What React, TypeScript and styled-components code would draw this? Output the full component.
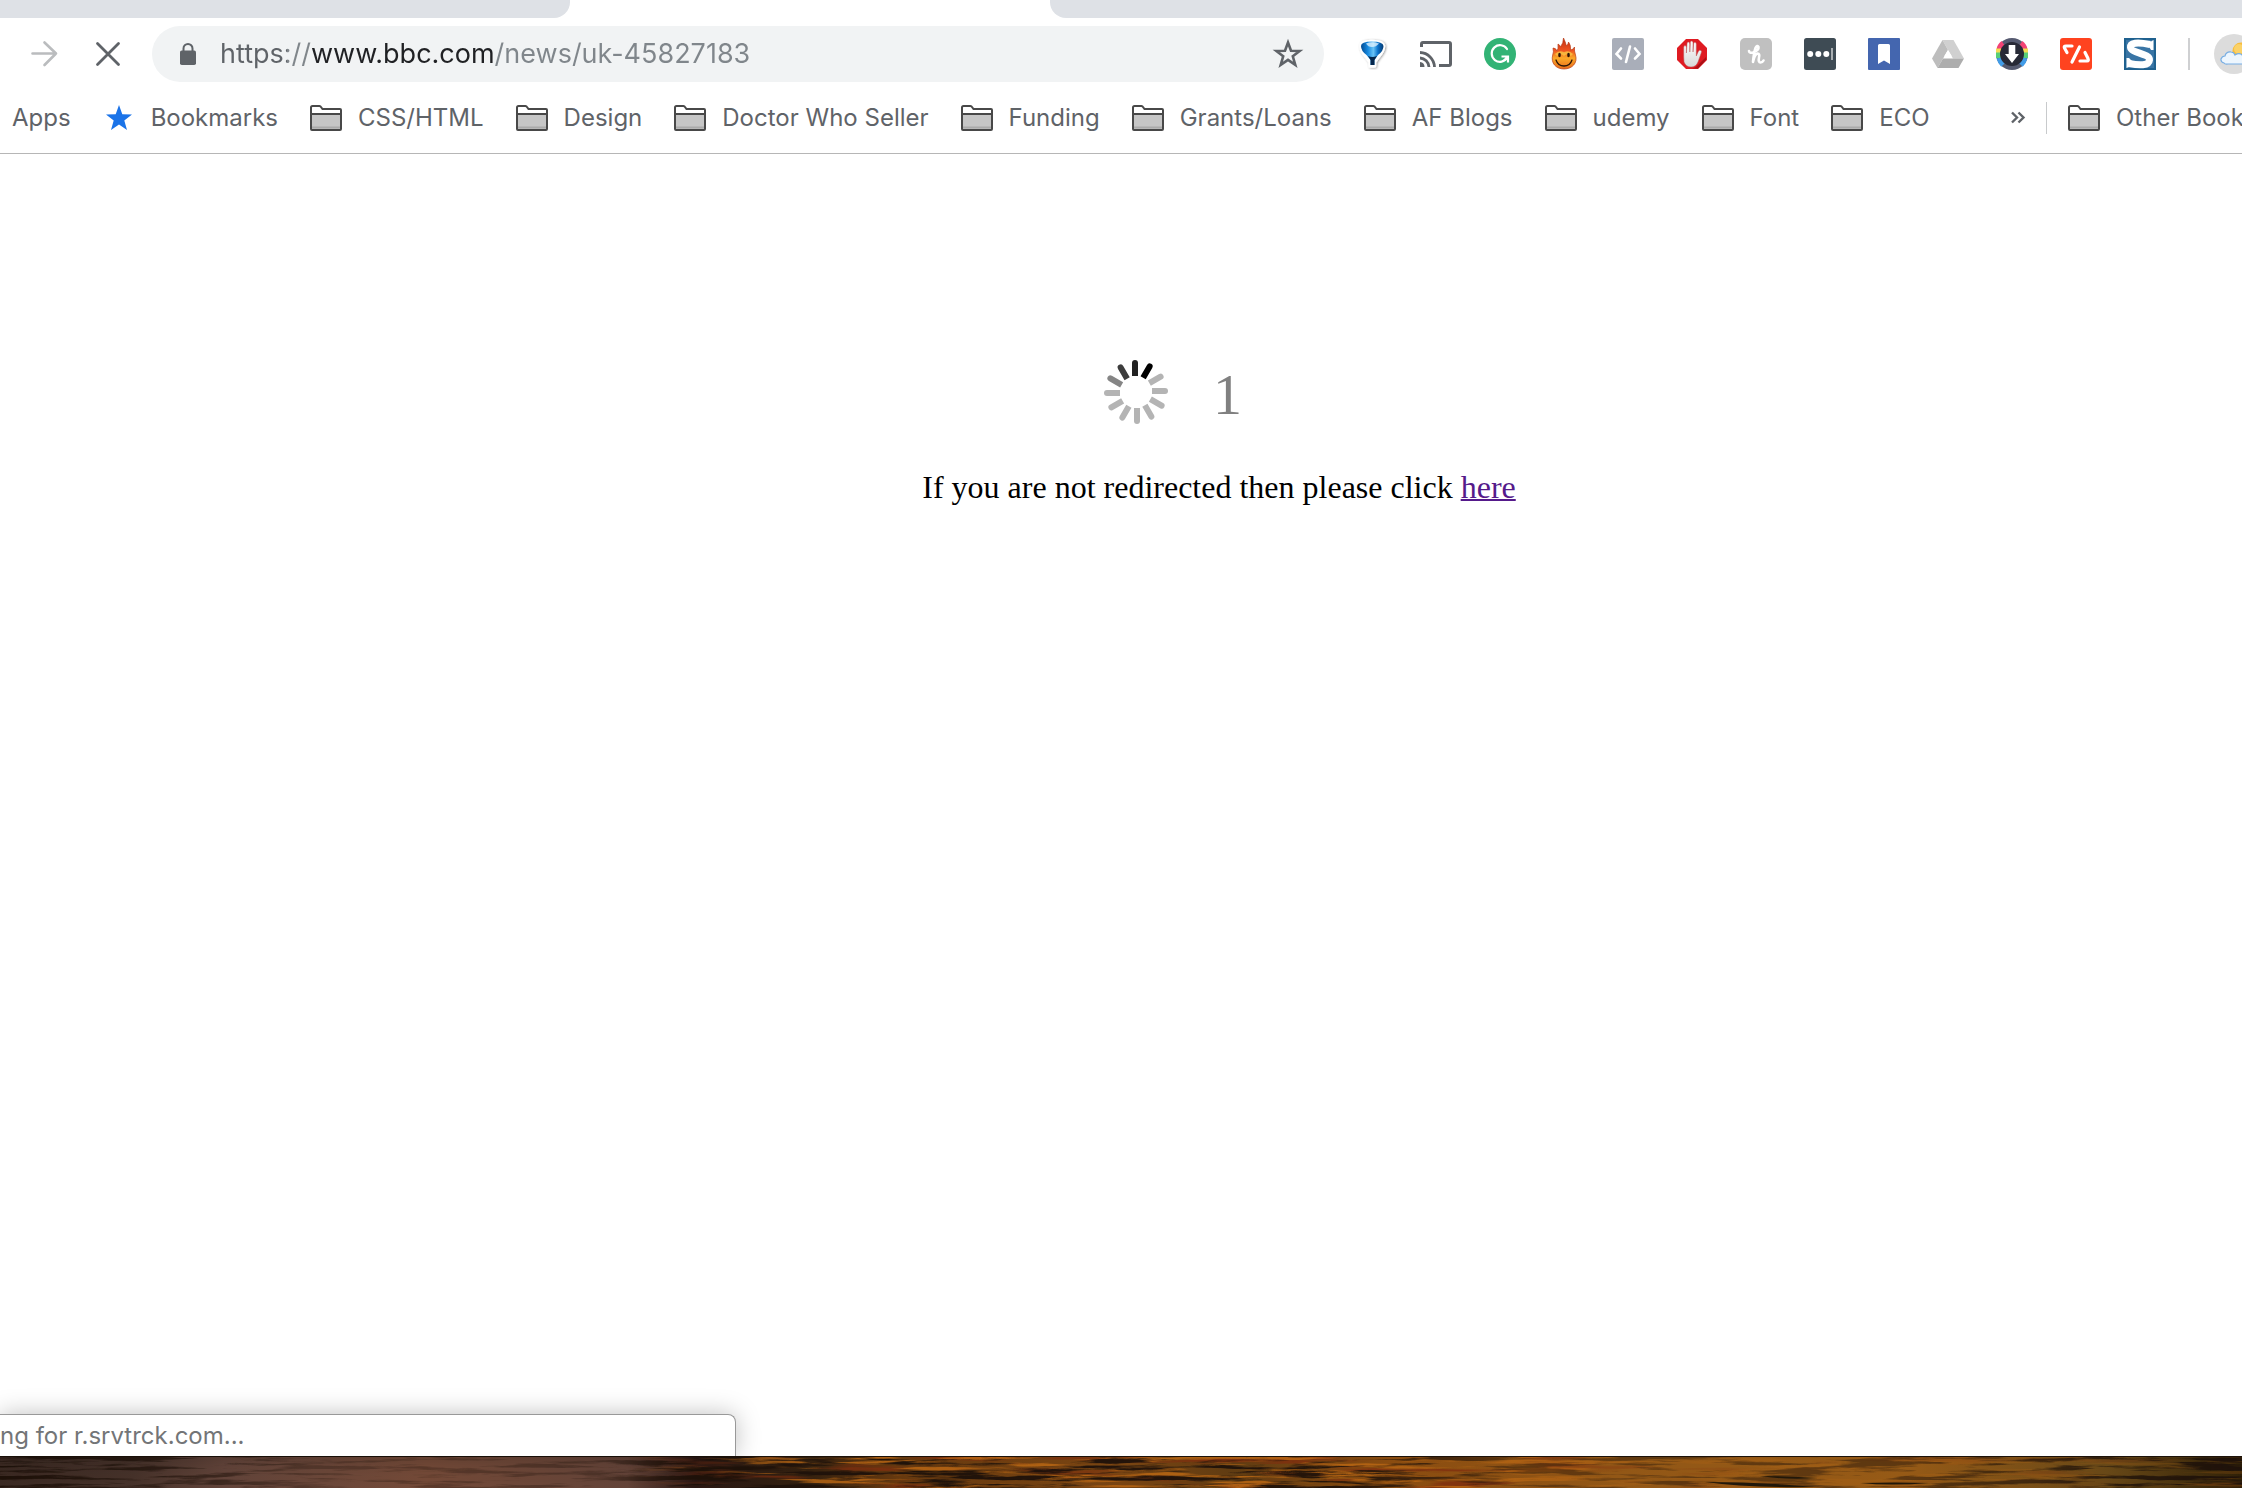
import React from "react";
import styled, { createGlobalStyle } from "styled-components";

const GlobalStyle = createGlobalStyle`
  *, *::before, *::after { box-sizing: border-box; }
  html, body { margin: 0; height: 100%; }
  #root { height: 100%; }
  body { background: #fff; overflow: hidden; }
`;

const uiFont = `Inter, Roboto, "Liberation Sans", sans-serif`;

const Screen = styled.div`
  display: flex;
  flex-direction: column;
  height: 100vh;
  overflow: hidden;
  font-family: ${uiFont};
`;

const TabStrip = styled.div`
  display: flex;
  flex: none;
  height: 18px;
  background: #fff;
`;

const InactiveTab = styled.div<{ $side: "left" | "right" }>`
  flex: ${(p) => (p.$side === "left" ? "0 0 570px" : "1")};
  background: #dee1e6;
  border-radius: ${(p) => (p.$side === "left" ? "0 0 16px 0" : "0 0 0 16px")};
`;

const ActiveTab = styled.div`
  flex: 0 0 480px;
`;

const Toolbar = styled.header`
  display: flex;
  flex: none;
  align-items: center;
  height: 72px;
  padding-left: 28px;
  background: #fff;
`;

const IconButton = styled.button`
  flex: none;
  display: flex;
  width: 32px;
  height: 32px;
  padding: 0;
  border: 0;
  background: none;
  color: #5f6368;

  svg { display: block; width: 32px; height: 32px; }
  &:disabled { color: #babcbe; }
`;

const NavButtons = styled.nav`
  display: flex;
  gap: 32px;
  margin-right: 28px;
`;

const Omnibox = styled.div`
  display: flex;
  flex: 1;
  align-items: center;
  min-width: 0;
  height: 56px;
  padding: 0 20px;
  border-radius: 28px;
  background: #f1f3f4;
  color: #5f6368;
`;

const LockIcon = styled.svg`
  flex: none;
  width: 32px;
  height: 32px;
  margin-right: 16px;
`;

const AddressInput = styled.input`
  flex: 1;
  min-width: 0;
  height: 40px;
  padding: 0;
  border: 0;
  outline: 0;
  font: 400 27px/40px ${uiFont};
  color: transparent;
  background: linear-gradient(90deg, #5f6368 67px, #80868b 67px 92px, #202124 92px 275px, #80868b 275px);
  -webkit-background-clip: text;
  background-clip: text;
`;

const Extensions = styled.div`
  display: flex;
  gap: 32px;
  margin-left: 32px;
`;

const ToolbarDivider = styled.div`
  flex: none;
  width: 2px;
  height: 32px;
  margin: 0 24px 0 32px;
  background: #cfd0d2;
`;

const ProfileButton = styled.button`
  flex: none;
  width: 28px;
  height: 40px;
  padding: 0;
  border: 0;
  background: none;
  overflow: hidden;

  svg { display: block; width: 40px; height: 40px; }
`;

const BookmarkBar = styled.nav`
  display: flex;
  flex: none;
  align-items: center;
  gap: 32px;
  height: 64px;
  padding: 0 0 8px 12px;
  border-bottom: 1px solid #b6b6b6;
  background: #fff;
`;

const Bookmark = styled.button`
  flex: none;
  display: flex;
  align-items: center;
  gap: 16px;
  padding: 0;
  border: 0;
  background: none;
  color: #5f6368;
  font: 400 24px/32px ${uiFont};
  white-space: nowrap;

  svg { display: block; width: 32px; height: 32px; }
`;

const OverflowGroup = styled.div`
  display: flex;
  align-items: center;
  flex: none;
  width: 232px;
  margin-left: auto;
  overflow: hidden;
`;

const BarDivider = styled.div`
  flex: none;
  width: 1px;
  height: 32px;
  margin: 0 21px 0 4px;
  background: #c8cacc;
`;

const Page = styled.main`
  position: relative;
  flex: 1;
  min-height: 0;
  display: flex;
  flex-direction: column;
  align-items: center;
  padding: 206px 0 0 196px;
  background: #fff;
  color: #000;
  font-family: "Liberation Serif", "Times New Roman", serif;
`;

const Countdown = styled.div`
  display: flex;
  align-items: flex-start;
  gap: 45px;
  width: 230px;
`;

const Spinner = styled.svg`
  flex: none;
  width: 64px;
  height: 64px;
`;

const Count = styled.span`
  color: #808080;
  font-size: 58px;
  line-height: 70px;
`;

const Notice = styled.p`
  margin: 37px 0 0;
  font-size: 32px;
  line-height: 40px;

  a { color: #551a8b; text-decoration-thickness: 2px; }
`;

const StatusBubble = styled.div`
  position: absolute;
  left: 0;
  bottom: 0;
  width: 736px;
  height: 42px;
  border: 1px solid #999;
  border-width: 1px 1px 0 0;
  border-radius: 0 8px 0 0;
  background: #fff;
  box-shadow: 0 0 24px rgba(0, 0, 0, 0.25);
  color: #737577;
  font: 400 24px/42px ${uiFont};
`;

const Desktop = styled.div`
  flex: none;
  height: 32px;
  overflow: hidden;
  background: #6b4212;

  svg { display: block; width: 100%; height: 32px; }
`;

const Folder = () => (
  <svg viewBox="0 0 32 32" aria-hidden="true">
    <path d="M1 27V5.5Q1 4 2.500 4H9.500Q11 4 11.500 5.500L12.500 7H30Q31 7 31 8V27Q31 28 30 28H2Q1 28 1 27Z" fill="#fff" />
    <path d="M2 12H30V27H2Z" fill="#c6c6c6" />
    <path d="M2 25.500H30" stroke="#aaa" strokeWidth="2" />
    <path d="M1 27V5.500Q1 4 2.500 4H9.500Q10.500 4 11 5L12.500 7H30Q31 7 31 8V27Q31 28 30 28H2Q1 28 1 27ZM1 12H31" fill="none" stroke="#484848" strokeWidth="2" />
  </svg>
);

const BlueStar = () => (
  <svg viewBox="0 0 32 32" aria-hidden="true">
    <path d="M16 3L19.300 12.300L29 12.600L21.300 18.500L24 28L16 22.500L8 28L10.700 18.500L3 12.600L12.700 12.300Z" fill="#1a73e8" />
  </svg>
);

const Svg = ({ children }: { children: React.ReactNode }) => (
  <svg viewBox="0 0 32 32" fill="none" aria-hidden="true">{children}</svg>
);

const extensions: { name: string; art: React.ReactNode }[] = [
  {
    name: "Yandex balloon",
    art: (
      <Svg>
        <defs>
          <linearGradient id="balloon" x1="0" y1="0" x2="1" y2="0">
            <stop offset="0" stopColor="#034a91" />
            <stop offset=".3" stopColor="#1689df" />
            <stop offset=".55" stopColor="#68c3f7" />
            <stop offset=".75" stopColor="#0a72cb" />
            <stop offset="1" stopColor="#06396f" />
          </linearGradient>
          <filter id="softShadow" x="-30%" y="-30%" width="160%" height="160%">
            <feDropShadow dx="1" dy="0.500" stdDeviation="1" floodOpacity=".4" />
          </filter>
        </defs>
        <path d="M5 8Q5 3.500 16 3.500T27.500 8Q27.500 13 22 19L18.500 24V28H14V24L10.500 19Q5 13 5 8Z" fill="#fff" stroke="#fff" strokeWidth="3.500" strokeLinejoin="round" filter="url(#softShadow)" />
        <path d="M5 8Q5 3.500 16 3.500T27.500 8Q27.500 13 22 17L18.500 22V27H14.500V22L10.500 17Q5 13 5 8Z" fill="url(#balloon)" />
        <path d="M10 5.500Q16 3 23 5.500Q20 9 16 9T10 5.500Z" fill="#e8f6ff" opacity=".75" />
        <path d="M12 18L14.500 22V27H18.500V22L21 18Q16 20 12 18Z" fill="#04264c" />
      </Svg>
    ),
  },
  {
    name: "Cast",
    art: (
      <Svg>
        <path d="M1.500 9V6Q1.500 4.500 3 4.500H29Q30.500 4.500 30.500 6V26Q30.500 27.500 29 27.500H19" stroke="#5f6368" strokeWidth="3" />
        <path d="M0 14.500A15 15 0 0 1 14.500 29M0 20A9.500 9.500 0 0 1 9 29" stroke="#5f6368" strokeWidth="2.800" />
        <path d="M0 24A5 5 0 0 1 4.500 29H0Z" fill="#5f6368" />
      </Svg>
    ),
  },
  {
    name: "Grammarly",
    art: (
      <Svg>
        <circle cx="16" cy="16" r="16" fill="#32b375" />
        <path d="M23 11A8.300 8.300 0 1 0 23.300 19.500" stroke="#fff" strokeWidth="2.200" strokeLinecap="round" />
        <path d="M17.500 18.500H24V24.500M24 18.500L20 22.500" stroke="#fff" strokeWidth="2.200" />
      </Svg>
    ),
  },
  {
    name: "Hola",
    art: (
      <Svg>
        <defs>
          <linearGradient id="flame" x1="0" y1="0" x2="0" y2="1">
            <stop offset="0" stopColor="#c02c13" />
            <stop offset=".4" stopColor="#ee5420" />
            <stop offset=".65" stopColor="#fba928" />
            <stop offset="1" stopColor="#e96d1c" />
          </linearGradient>
        </defs>
        <path d="M15.500 0Q17 3 18.500 8Q20.500 6 20.500 4Q23 7 22.500 12Q25 12 26.500 9Q26 13 27.500 17C30 25 24 31 16 31S2.500 25 4.700 17Q6 14 5 10Q8 10 9 13Q10.500 11 10 6Q12 7 12.500 9Q15.500 5 15.500 0Z" fill="url(#flame)" stroke="#b83c17" strokeWidth=".7" />
        <path d="M8 17Q12 13 16 16Q20 13 24 17" stroke="#fad24a" strokeWidth="3" opacity=".7" />
        <ellipse cx="11.500" cy="17" rx="1.300" ry="2.200" fill="#2b1609" />
        <ellipse cx="20.500" cy="17" rx="1.300" ry="2.200" fill="#2b1609" />
        <path d="M8 22Q10 28 16 28T24 22" stroke="#2b1609" strokeWidth="1.300" strokeLinecap="round" />
      </Svg>
    ),
  },
  {
    name: "Source viewer",
    art: (
      <Svg>
        <rect width="32" height="32" rx="2" fill="#a9aeb9" />
        <path d="M9 10.500L4.500 16L9 20.500M23 10.500L27.500 16L23 20.500M18 8.500L14 24" stroke="#fff" strokeWidth="2.600" strokeLinecap="round" />
      </Svg>
    ),
  },
  {
    name: "AdBlock",
    art: (
      <Svg>
        <defs>
          <linearGradient id="palm" x1="0" y1="0" x2="0" y2="1">
            <stop offset="0" stopColor="#fff" />
            <stop offset="1" stopColor="#d8d8d8" />
          </linearGradient>
        </defs>
        <path d="M10 1H22L31 10V22L22 31H10L1 22V10Z" fill="#df1b22" />
        <path d="M20 29L30 19V22L22 30.500H16Z" fill="#aa1016" />
        <path d="M7.700 19V9.500Q7.700 7.500 9 7.500T10.400 9.500V15L11 6Q11 4 12.300 4T13.800 6V14L14.300 4.500Q14.300 3 15.600 3T17 4.500V14L17.600 6Q17.600 4.300 18.900 4.300T20.300 6V18L22.300 13.500Q23.500 11.500 25 12.500Q26 13 25.200 15L22 24Q20 29 15 29T8 24Z" fill="url(#palm)" stroke="#b85a5a" strokeWidth=".5" />
      </Svg>
    ),
  },
  {
    name: "Honey",
    art: (
      <Svg>
        <rect width="32" height="32" rx="5" fill="#c0c0c0" />
        <path d="M9 13Q9.500 15.500 13 14.500Q19 12.500 18.500 9Q17.500 6.500 15.500 10Q14 14 13 24Q14.500 16.500 17.500 15.500Q20 15.500 19 19.500Q18 24.500 20.500 24.500Q22.500 24.500 23.500 22.500" stroke="#fff" strokeWidth="2.600" strokeLinecap="round" strokeLinejoin="round" />
      </Svg>
    ),
  },
  {
    name: "Password manager",
    art: (
      <Svg>
        <rect width="32" height="32" rx="2.500" fill="#3e4b54" />
        <circle cx="6.200" cy="16" r="3" fill="#fff" />
        <circle cx="14.300" cy="16" r="3" fill="#fff" />
        <circle cx="22.300" cy="16" r="3" fill="#fff" />
        <path d="M28 10V22" stroke="#b5babd" strokeWidth="1.800" />
      </Svg>
    ),
  },
  {
    name: "Save bookmark",
    art: (
      <Svg>
        <rect width="32" height="32" rx="1" fill="#4466af" />
        <path d="M10 7.500Q10 6 11.500 6H20.500Q22 6 22 7.500V26L16 22.500L10 26Z" fill="#fff" />
      </Svg>
    ),
  },
  {
    name: "Drive",
    art: (
      <Svg>
        <path d="M10.500 2H21.500L32 20.500H21L16 12Z" fill="#d0d0d0" />
        <path d="M10.500 2L16 12L5.500 30L0 20.500Z" fill="#bdbdbd" />
        <path d="M11 20.500H32L26.500 30H5.500Z" fill="#adadad" />
        <path d="M16 12L20 18.500H12Z" fill="#fff" />
      </Svg>
    ),
  },
  {
    name: "Downloader",
    art: (
      <Svg>
        <circle cx="16" cy="16" r="16" fill="#555a70" />
        <g strokeWidth="5">
          <path d="M3 11Q4 7 7 5M29 11Q28 7 25 5" stroke="#f34375" />
          <path d="M2.500 15V10.500M29.500 15V10.500" stroke="#f6dc53" />
          <path d="M2.500 20V14.500M29.500 20V14.500" stroke="#57cf78" />
          <path d="M3 20Q4 24 7 27M29 20Q28 24 25 27" stroke="#419ce8" />
        </g>
        <circle cx="16" cy="16" r="12" fill="#272936" />
        <path d="M12.700 7H19.300V16H23L16 25L9 16H12.700Z" fill="#fff" />
      </Svg>
    ),
  },
  {
    name: "Code switch",
    art: (
      <Svg>
        <rect width="32" height="32" rx="3" fill="#ff431f" />
        <path d="M12 8H6Q3.500 8 4.500 10L7 14.500M25 14.500L28 20.500Q29 23 27 23H20M19.500 9L12 24" stroke="#fff" strokeWidth="3.200" strokeLinecap="round" />
      </Svg>
    ),
  },
  {
    name: "Stylish",
    art: (
      <Svg>
        <rect width="32" height="32" fill="#3975a5" />
        <rect x="1" y="1" width="30" height="30" stroke="#1f618f" strokeWidth="2" />
        <path d="M26 6.500Q6 2.500 6.500 9.500C7 15 26 15.500 25.500 22C25 28 15 27.500 5 25.500" stroke="#fff" strokeWidth="7" />
        <path d="M29.500 2V12H27Q26 9 22 8L24 3.500H27ZM2.500 30V20H5Q7 23 11 24L9 29H5Z" fill="#fff" />
      </Svg>
    ),
  },
];

const folders = ["CSS/HTML", "Design", "Doctor Who Seller", "Funding", "Grants/Loans", "AF Blogs", "udemy", "Font", "ECO"];

const spokes = ["#222", "#000", "#b4b4b4", "#b4b4b4", "#b4b4b4", "#b4b4b4", "#b4b4b4", "#b4b4b4", "#b4b4b4", "#b4b4b4", "#858585", "#3c3c3c"];

const WoodGrain = () => (
  <svg viewBox="0 0 2242 32" preserveAspectRatio="none" aria-hidden="true">
    <defs>
      <linearGradient id="wood">
        <stop offset="0" stopColor="#3a2922" />
        <stop offset=".06" stopColor="#46322a" />
        <stop offset=".1" stopColor="#62443a" />
        <stop offset=".19" stopColor="#744a38" />
        <stop offset=".28" stopColor="#634338" />
        <stop offset=".31" stopColor="#291814" />
        <stop offset=".36" stopColor="#33200f" />
        <stop offset=".4" stopColor="#66390f" />
        <stop offset=".5" stopColor="#7a4512" />
        <stop offset=".55" stopColor="#603c12" />
        <stop offset=".62" stopColor="#8a4c10" />
        <stop offset=".72" stopColor="#925716" />
        <stop offset=".85" stopColor="#965a16" />
        <stop offset=".94" stopColor="#684817" />
        <stop offset="1" stopColor="#302108" />
      </linearGradient>
      <linearGradient id="amberFade">
        <stop offset=".28" stopColor="#000" />
        <stop offset=".36" stopColor="#ccc" />
        <stop offset=".65" stopColor="#ccc" />
        <stop offset=".75" stopColor="#333" />
      </linearGradient>
      <linearGradient id="darkFade">
        <stop offset="0" stopColor="#fff" />
        <stop offset=".1" stopColor="#888" />
        <stop offset=".14" stopColor="#444" />
        <stop offset=".27" stopColor="#555" />
        <stop offset=".31" stopColor="#fff" />
        <stop offset=".6" stopColor="#eee" />
        <stop offset=".68" stopColor="#666" />
        <stop offset=".85" stopColor="#777" />
        <stop offset="1" stopColor="#fff" />
      </linearGradient>
      <mask id="amberMask"><rect width="2242" height="32" fill="url(#amberFade)" /></mask>
      <mask id="darkMask"><rect width="2242" height="32" fill="url(#darkFade)" /></mask>
      <filter id="darkGrain" x="0" y="0" width="100%" height="100%" colorInterpolationFilters="sRGB">
        <feTurbulence type="fractalNoise" baseFrequency="0.012 0.2" numOctaves="5" seed="8" />
        <feColorMatrix values="0 0 0 0 .12  0 0 0 0 .07  0 0 0 0 .04  6 0 0 0 -2.9" />
      </filter>
      <filter id="amberGrain" x="0" y="0" width="100%" height="100%" colorInterpolationFilters="sRGB">
        <feTurbulence type="fractalNoise" baseFrequency="0.01 0.22" numOctaves="4" seed="21" />
        <feColorMatrix values="0 0 0 0 .74  0 0 0 0 .41  0 0 0 0 .08  7 0 0 0 -3.7" />
      </filter>
      <filter id="redGrain" x="0" y="0" width="100%" height="100%" colorInterpolationFilters="sRGB">
        <feTurbulence type="fractalNoise" baseFrequency="0.008 0.12" numOctaves="4" seed="5" />
        <feColorMatrix values="0 0 0 0 .5  0 0 0 0 .18  0 0 0 0 .06  5 0 0 0 -2.7" />
      </filter>
    </defs>
    <rect width="2242" height="32" fill="url(#wood)" />
    <g mask="url(#amberMask)"><rect width="2242" height="32" filter="url(#redGrain)" /></g>
    <g mask="url(#amberMask)"><rect width="2242" height="32" filter="url(#amberGrain)" /></g>
    <g mask="url(#darkMask)"><rect width="2242" height="32" filter="url(#darkGrain)" /></g>
    <path d="M1705 26Q1760 26 1815 31Q1750 32 1705 26ZM1760 20Q1790 20 1818 22Q1785 24 1760 20ZM1860 27Q1895 26 1930 27Q1890 30 1860 27Z" fill="#21180a" />
    <path d="M0 .5H2242" stroke="#1c120a" strokeWidth="1" />
  </svg>
);

export default function App() {
  return (
    <Screen>
      <GlobalStyle />
      <TabStrip>
        <InactiveTab $side="left" />
        <ActiveTab />
        <InactiveTab $side="right" />
      </TabStrip>

      <Toolbar>
        <NavButtons aria-label="Navigation">
          <IconButton aria-label="Forward" disabled>
            <Svg><path d="M4.500 15.500H28M16.500 4.500L28 15.500L16.500 27" stroke="currentColor" strokeWidth="2.600" strokeLinecap="round" strokeLinejoin="round" /></Svg>
          </IconButton>
          <IconButton aria-label="Stop loading">
            <Svg><path d="M5.500 5.500L26.500 26.500M26.500 5.500L5.500 26.500" stroke="currentColor" strokeWidth="2.800" strokeLinecap="round" /></Svg>
          </IconButton>
        </NavButtons>
        <Omnibox>
          <LockIcon viewBox="0 0 32 32" fill="none" aria-hidden="true">
            <rect x="8" y="12.500" width="16" height="14.500" rx="1.800" fill="currentColor" />
            <path d="M11.500 13V10.500A4.500 4.500 0 0 1 20.500 10.500V13" stroke="currentColor" strokeWidth="2" />
          </LockIcon>
          <AddressInput aria-label="Address" type="text" defaultValue="https://www.bbc.com/news/uk-45827183" spellCheck={false} />
          <IconButton aria-label="Bookmark this page">
            <Svg><path d="M16 4.500L19 12.700L27.700 13L20.800 18.300L23.300 26.800L16 21.900L8.700 26.800L11.200 18.300L4.300 13L13 12.700Z" stroke="currentColor" strokeWidth="2.600" /></Svg>
          </IconButton>
        </Omnibox>
        <Extensions>
          {extensions.map((e) => (
            <IconButton key={e.name} aria-label={e.name}>{e.art}</IconButton>
          ))}
        </Extensions>
        <ToolbarDivider />
        <ProfileButton aria-label="Profile">
          <svg viewBox="0 0 40 40" aria-hidden="true">
            <circle cx="20" cy="20" r="20" fill="#dcdcdc" />
            <circle cx="27" cy="17" r="8.500" fill="#f7bd3c" />
            <circle cx="25" cy="15" r="5" fill="#fbd268" />
            <path d="M10 29Q6.500 28 7 25Q8 22 11 22Q12 17.500 17 18Q20 18 21 21Q26 18 29 22H40V30H14Q11 30.500 10 29Z" fill="#edf6fe" stroke="#78aee3" strokeWidth="1.200" />
          </svg>
        </ProfileButton>
      </Toolbar>

      <BookmarkBar aria-label="Bookmarks">
        <Bookmark>Apps</Bookmark>
        <Bookmark><BlueStar />Bookmarks</Bookmark>
        {folders.map((name) => (
          <Bookmark key={name}><Folder />{name}</Bookmark>
        ))}
        <OverflowGroup>
          <IconButton aria-label="More bookmarks">
            <Svg><path d="M2 10.500L7 15.500L2 20.500M8.500 10.500L13.500 15.500L8.500 20.500" stroke="currentColor" strokeWidth="2.400" /></Svg>
          </IconButton>
          <BarDivider />
          <Bookmark><Folder />Other Bookmarks</Bookmark>
        </OverflowGroup>
      </BookmarkBar>

      <Page>
        <Countdown>
          <Spinner viewBox="0 0 64 64" role="img" aria-label="Loading">
            {spokes.map((color, i) => (
              <path key={i} d="M28 16V3Q28 0 31 0T34 3V16Z" fill={color} transform={`rotate(${i * 30} 32 32)`} />
            ))}
          </Spinner>
          <Count>1</Count>
        </Countdown>
        <Notice>
          If you are not redirected then please click <a href="#here">here</a>
        </Notice>
        <StatusBubble role="status">ng for r.srvtrck.com...</StatusBubble>
      </Page>

      <Desktop><WoodGrain /></Desktop>
    </Screen>
  );
}
